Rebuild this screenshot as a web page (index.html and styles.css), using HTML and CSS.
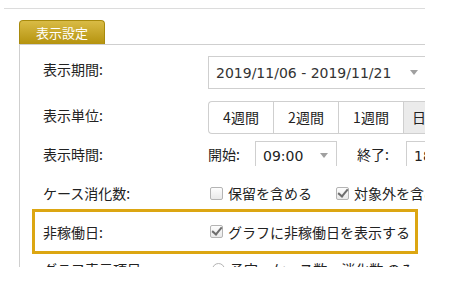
FILE: index.html
```html
<!DOCTYPE html>
<html>
<head>
<title>表示設定</title>
<link rel="stylesheet" href="styles.css">
</head>
<body>
<div class="client_area">
	<div class="top_line"></div>
	<div class="section">
		<div class="tab">表示設定</div>
		<div class="panel">
			<div class="row row_period">
				<div class="label">表示期間:</div>
				<div class="select date_select"><span>2019/11/06 - 2019/11/21</span><i class="arrow"></i></div>
			</div>
			<div class="row row_unit">
				<div class="label">表示単位:</div>
				<div class="btn_group">
					<div class="unit_btn">4週間</div>
					<div class="unit_btn">2週間</div>
					<div class="unit_btn">1週間</div>
					<div class="unit_btn active">日</div>
				</div>
			</div>
			<div class="row row_time">
				<div class="label">表示時間:</div>
				<div class="time_ctrl">
					<span class="time_label">開始:</span>
					<div class="select time_select"><span>09:00</span><i class="arrow"></i></div>
					<span class="time_label end_label">終了:</span>
					<div class="select time_select"><span>18:00</span><i class="arrow"></i></div>
				</div>
			</div>
			<div class="row row_case">
				<div class="label">ケース消化数:</div>
				<div class="check_ctrl">
					<span class="check"></span><span class="check_text">保留を含める</span>
					<span class="check checked second"></span><span class="check_text">対象外を含める</span>
				</div>
			</div>
			<div class="row highlight">
				<div class="label">非稼働日:</div>
				<div class="check_ctrl">
					<span class="check checked"></span><span class="check_text">グラフに非稼働日を表示する</span>
				</div>
			</div>
			<div class="row row_graph">
				<div class="label">グラフ表示項目:</div>
				<div class="check_ctrl">
					<span class="radio"></span><span class="check_text">予定、ケース数、消化数 のみ</span>
				</div>
			</div>
		</div>
	</div>
</div>
</body>
</html>
```

FILE: styles.css
```css
body
{
	margin : 0;
	background-color : white;
	font-family : "DejaVu Sans", "Noto Sans CJK JP", sans-serif;
	font-size : 14px;
	color : #222;
}
.client_area
{
	width : 425px;
	height : 267px;
	overflow : hidden;
}
.top_line
{
	margin : 8px 0 0 4px;
	border-top : 1px solid #dcdcdc;
}
.section
{
	margin : 11px 0 0 19px;
}
.tab
{
	width : 86px;
	height : 24px;
	box-sizing : border-box;
	border : 1px solid #a88a0c;
	border-bottom : none;
	border-radius : 4px 4px 0 0;
	background : linear-gradient(#d9bb45, #b5930f);
	color : white;
	font-family : "Noto Sans CJK JP", sans-serif;
	font-size : 13px;
	line-height : 23px;
	text-align : center;
}
.panel
{
	border-top : 1px solid #cfcfcf;
	border-left : 1px solid #cfcfcf;
	padding-top : 11px;
	height : 300px;
}
.row
{
	display : grid;
	grid-template-columns : 165px auto;
	align-items : center;
	padding-left : 23px;
	white-space : nowrap;
}
.label
{
	font-family : "Noto Sans CJK JP", sans-serif;
	line-height : 20px;
}
.row_period
{
	height : 33px;
}
.row_period .label
{
	margin-top : -7px;
}
.select
{
	display : flex;
	align-items : center;
	justify-content : space-between;
	box-sizing : border-box;
	border : 1px solid #cfcfcf;
	background-color : white;
}
.date_select
{
	width : 222px;
	height : 33px;
	padding : 0 11px 0 7px;
	color : #333;
}
.arrow
{
	width : 0;
	height : 0;
	border-left : 4px solid transparent;
	border-right : 4px solid transparent;
	border-top : 5px solid #a0a0a0;
}
.row_unit
{
	margin-top : 12px;
	height : 33px;
}
.row_unit .label
{
	margin-top : -6px;
}
.btn_group
{
	display : flex;
	height : 33px;
	box-sizing : border-box;
	border : 1px solid #cfcfcf;
	border-right : none;
	border-radius : 4px 0 0 4px;
}
.unit_btn
{
	flex : none;
	width : 64px;
	line-height : 31px;
	text-align : center;
	border-left : 1px solid #cfcfcf;
	font-family : "Noto Sans CJK JP", sans-serif;
}
.unit_btn:first-child
{
	border-left : none;
}
.unit_btn.active
{
	background-color : #ebebeb;
	text-align : left;
	padding-left : 8px;
}
.row_time
{
	margin-top : 7px;
	height : 25px;
}
.time_ctrl
{
	display : flex;
	align-items : center;
	height : 25px;
}
.time_label
{
	font-family : "Noto Sans CJK JP", sans-serif;
	width : 47px;
	flex : none;
}
.end_label
{
	margin-left : 20px;
	width : 49px;
}
.time_select
{
	width : 82px;
	height : 25px;
	padding : 3px 8px 0 7px;
	border-bottom : none;
	flex : none;
}
.row_case
{
	margin-top : 17px;
	height : 20px;
}
.check_ctrl
{
	display : flex;
	align-items : center;
	font-family : "Noto Sans CJK JP", sans-serif;
}
.check
{
	position : relative;
	width : 13px;
	height : 13px;
	margin-left : 2px;
	box-sizing : border-box;
	border : 1px solid #b4b4b4;
	border-radius : 2px;
	background : linear-gradient(#fdfdfd, #e9e9e9);
	flex : none;
}
.check.checked::after
{
	content : "";
	position : absolute;
	left : 3px;
	top : -1px;
	width : 4px;
	height : 8px;
	border-right : 2px solid #6d6d6d;
	border-bottom : 2px solid #6d6d6d;
	transform : rotate(40deg);
}
.check.second
{
	margin-left : 24px;
}
.check_text
{
	margin-left : 5px;
	line-height : 20px;
}
.highlight
{
	margin : 6px 0 0 12px;
	width : 386px;
	height : 45px;
	box-sizing : border-box;
	border : 3px solid #dca612;
	padding-left : 8px;
}
.row_graph
{
	margin-top : 5px;
	height : 20px;
}
.radio
{
	width : 13px;
	height : 13px;
	margin-left : 4px;
	box-sizing : border-box;
	border : 1px solid #b4b4b4;
	border-radius : 50%;
	flex : none;
}
```
